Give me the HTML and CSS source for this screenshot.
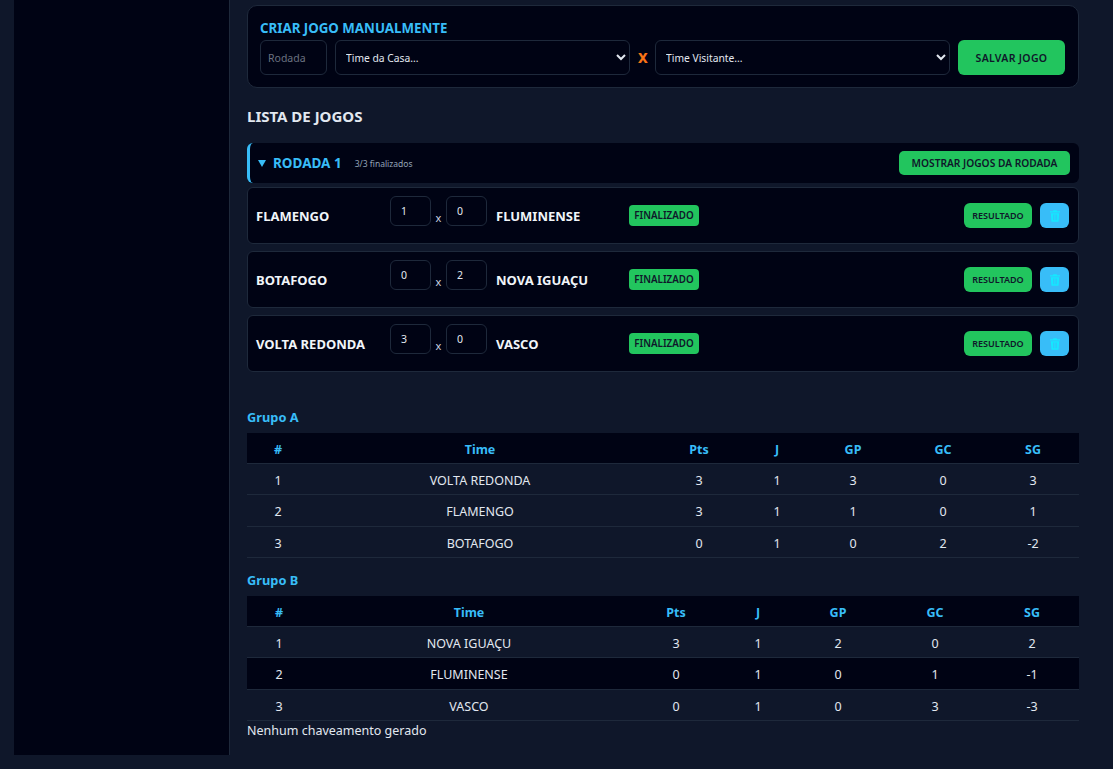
FILE: index.html
```html
<!DOCTYPE html>
<html lang="pt-BR">
<head>
  <meta charset="UTF-8" />
  <title>Jogos</title>
  <link rel="stylesheet" href="styles.css">
</head>
<body>

<div class="layout">
  <div class="sidebar"></div>

  <div class="content">

    <div class="create-card">
      <h3>CRIAR JOGO MANUALMENTE</h3>
      <div class="create-form">
        <input class="round-input" type="text" placeholder="Rodada" />
        <select class="team-select"><option>Time da Casa...</option></select>
        <span class="versus">X</span>
        <select class="team-select"><option>Time Visitante...</option></select>
        <button class="save-btn">SALVAR JOGO</button>
      </div>
    </div>

    <h2 class="list-title">LISTA DE JOGOS</h2>

    <div class="round-header">
      <span class="arrow"></span>
      <span class="round-name">RODADA 1</span>
      <span class="round-count">3/3 finalizados</span>
      <button class="show-btn">MOSTRAR JOGOS DA RODADA</button>
    </div>

    <div class="match">
      <span class="team home">FLAMENGO</span>
      <input class="score" type="text" value="1" />
      <span class="score-x">x</span>
      <input class="score" type="text" value="0" />
      <span class="team away">FLUMINENSE</span>
      <span class="badge">FINALIZADO</span>
      <button class="result-btn">RESULTADO</button>
      <button class="delete-btn">
        <svg viewBox="0 0 12 14" width="10" height="12"><path fill-rule="evenodd" d="M4 0h4l.6 1.2H12v1.6H0V1.2h3.4zM1 3.6h10l-.7 10.4H1.7zM3.6 5.2v7h.9v-7zM5.6 5.2v7h.9v-7zM7.6 5.2v7h.9v-7z" fill="#14e8ff"/></svg>
      </button>
    </div>

    <div class="match">
      <span class="team home">BOTAFOGO</span>
      <input class="score" type="text" value="0" />
      <span class="score-x">x</span>
      <input class="score" type="text" value="2" />
      <span class="team away">NOVA IGUAÇU</span>
      <span class="badge">FINALIZADO</span>
      <button class="result-btn">RESULTADO</button>
      <button class="delete-btn">
        <svg viewBox="0 0 12 14" width="10" height="12"><path fill-rule="evenodd" d="M4 0h4l.6 1.2H12v1.6H0V1.2h3.4zM1 3.6h10l-.7 10.4H1.7zM3.6 5.2v7h.9v-7zM5.6 5.2v7h.9v-7zM7.6 5.2v7h.9v-7z" fill="#14e8ff"/></svg>
      </button>
    </div>

    <div class="match">
      <span class="team home">VOLTA REDONDA</span>
      <input class="score" type="text" value="3" />
      <span class="score-x">x</span>
      <input class="score" type="text" value="0" />
      <span class="team away">VASCO</span>
      <span class="badge">FINALIZADO</span>
      <button class="result-btn">RESULTADO</button>
      <button class="delete-btn">
        <svg viewBox="0 0 12 14" width="10" height="12"><path fill-rule="evenodd" d="M4 0h4l.6 1.2H12v1.6H0V1.2h3.4zM1 3.6h10l-.7 10.4H1.7zM3.6 5.2v7h.9v-7zM5.6 5.2v7h.9v-7zM7.6 5.2v7h.9v-7z" fill="#14e8ff"/></svg>
      </button>
    </div>

    <h4 class="group-title first">Grupo A</h4>
    <table class="standings group-a">
      <colgroup><col class="c1"><col class="c2"><col class="c3"><col class="c4"><col class="c5"><col class="c6"><col class="c7"></colgroup>
      <thead>
        <tr><th>#</th><th>Time</th><th>Pts</th><th>J</th><th>GP</th><th>GC</th><th>SG</th></tr>
      </thead>
      <tbody>
        <tr><td>1</td><td>VOLTA REDONDA</td><td>3</td><td>1</td><td>3</td><td>0</td><td>3</td></tr>
        <tr><td>2</td><td>FLAMENGO</td><td>3</td><td>1</td><td>1</td><td>0</td><td>1</td></tr>
        <tr><td>3</td><td>BOTAFOGO</td><td>0</td><td>1</td><td>0</td><td>2</td><td>-2</td></tr>
      </tbody>
    </table>

    <h4 class="group-title">Grupo B</h4>
    <table class="standings group-b">
      <colgroup><col class="c1"><col class="c2"><col class="c3"><col class="c4"><col class="c5"><col class="c6"><col class="c7"></colgroup>
      <thead>
        <tr><th>#</th><th>Time</th><th>Pts</th><th>J</th><th>GP</th><th>GC</th><th>SG</th></tr>
      </thead>
      <tbody>
        <tr><td>1</td><td>NOVA IGUAÇU</td><td>3</td><td>1</td><td>2</td><td>0</td><td>2</td></tr>
        <tr class="hovered"><td>2</td><td>FLUMINENSE</td><td>0</td><td>1</td><td>0</td><td>1</td><td>-1</td></tr>
        <tr><td>3</td><td>VASCO</td><td>0</td><td>1</td><td>0</td><td>3</td><td>-3</td></tr>
      </tbody>
    </table>

    <p class="no-bracket">Nenhum chaveamento gerado</p>
  </div>
</div>

</body>
</html>
```

FILE: styles.css
```css
* {
  box-sizing: border-box;
  margin: 0;
  padding: 0;
  font-family: "Noto Sans", "Open Sans", sans-serif;
}

html, body {
  height: 100%;
  overflow: hidden;
}

body {
  background-color: #0f172a;
  color: #e2e8f0;
  color-scheme: dark;
  padding: 0 0 14px 14px;
}

.layout {
  display: flex;
  height: 755px;
}

.sidebar {
  width: 216px;
  background-color: #000314;
  border-right: 1px solid #1e293b;
}

.content {
  width: 866px;
  padding: 5px 17px 0 17px;
}

/* criar jogo */
.create-card {
  height: 83px;
  background-color: #000314;
  border: 1px solid #1e293b;
  border-radius: 10px;
  padding: 13px 13px 0 12px;
}

.create-card h3 {
  font-size: 13.3px;
  line-height: 18px;
  font-weight: 700;
  color: #38bdf8;
  margin-bottom: 3px;
}

.create-form {
  display: flex;
  align-items: center;
  gap: 8px;
}

.round-input,
.team-select,
.score {
  background-color: #000314;
  border: 1px solid #1e293b;
  border-radius: 6px;
  color: #e2e8f0;
  outline: none;
}

.round-input {
  width: 67px;
  height: 35px;
  padding: 0 7px;
  font-size: 10.5px;
}

.round-input::placeholder {
  color: #6b7280;
}

.team-select {
  width: 295px;
  height: 35px;
  padding: 0 6px;
  font-size: 10.3px;
}

.versus {
  width: 9px;
  color: #f97316;
  font-weight: 800;
  font-size: 14px;
  text-align: center;
}

.save-btn {
  width: 107px;
  height: 35px;
  background-color: #22c55e;
  border: none;
  border-radius: 6px;
  color: #0f172a;
  font-size: 10.5px;
  font-weight: 600;
  letter-spacing: 0.3px;
}

.list-title {
  font-size: 15px;
  line-height: 20px;
  font-weight: 700;
  color: #e2e8f0;
  margin: 18px 0 17px;
}

/* rodada */
.round-header {
  display: flex;
  align-items: center;
  height: 40px;
  background-color: #000314;
  border-left: 3px solid #38bdf8;
  border-radius: 6px;
  padding: 0 9px 0 8px;
  margin-bottom: 4px;
}

.arrow {
  width: 0;
  height: 0;
  border-left: 4.5px solid transparent;
  border-right: 4.5px solid transparent;
  border-top: 7px solid #38bdf8;
  margin-right: 7px;
}

.round-name {
  font-size: 13.5px;
  font-weight: 700;
  color: #38bdf8;
  margin-right: 13px;
}

.round-count {
  font-size: 8.5px;
  color: #94a3b8;
}

.show-btn {
  margin-left: auto;
  width: 171px;
  height: 24px;
  background-color: #22c55e;
  border: none;
  border-radius: 5px;
  color: #0f172a;
  font-size: 10.2px;
  font-weight: 600;
}

/* jogos */
.match {
  display: flex;
  align-items: center;
  height: 57px;
  background-color: #000314;
  border: 1px solid #1e293b;
  border-radius: 6px;
  padding: 0 9px 0 8px;
  margin-bottom: 7px;
}

.team {
  font-size: 13px;
  font-weight: 700;
  color: #f1f5f9;
}

.home {
  width: 134px;
}

.away {
  width: 133px;
  margin-left: 9px;
}

.score {
  width: 41px;
  height: 30px;
  padding: 0 0 0 10px;
  font-size: 10.5px;
  margin-top: -10px;
}

.score-x {
  width: 15px;
  text-align: center;
  font-size: 11px;
  color: #cbd5e1;
  margin-top: 3px;
}

.badge {
  width: 70px;
  height: 21px;
  line-height: 21px;
  text-align: center;
  background-color: #22c55e;
  border-radius: 4px;
  color: #0f172a;
  font-size: 9.8px;
  font-weight: 600;
}

.result-btn {
  margin-left: auto;
  width: 68px;
  height: 25px;
  background-color: #22c55e;
  border: none;
  border-radius: 6px;
  color: #0f172a;
  font-size: 9px;
  font-weight: 600;
}

.delete-btn {
  display: flex;
  align-items: center;
  justify-content: center;
  width: 29px;
  height: 25px;
  margin-left: 8px;
  background-color: #38bdf8;
  border: none;
  border-radius: 6px;
}

/* tabelas */
.group-title {
  font-size: 12.8px;
  line-height: 18px;
  font-weight: 700;
  color: #38bdf8;
  margin: 13px 0 7px;
}

.group-title.first {
  margin-top: 36px;
}

.standings {
  width: 832px;
  table-layout: fixed;
  border-collapse: collapse;
}

.standings th,
.standings td {
  text-align: center;
  border-bottom: 1px solid #1e293b;
  padding-top: 3px;
}

.standings th {
  height: 30px;
  background-color: #000314;
  color: #38bdf8;
  font-size: 12.5px;
  font-weight: 700;
}

.standings td {
  height: 31.5px;
  font-size: 12.5px;
  color: #e2e8f0;
}

.standings tr.hovered td {
  background-color: #000314;
}

.group-a .c1 { width: 62px; }
.group-a .c2 { width: 342px; }
.group-a .c3 { width: 96px; }
.group-a .c4 { width: 60px; }
.group-a .c5 { width: 92px; }
.group-a .c6 { width: 88px; }
.group-a .c7 { width: 92px; }

.group-b .c1 { width: 64px; }
.group-b .c2 { width: 316px; }
.group-b .c3 { width: 98px; }
.group-b .c4 { width: 66px; }
.group-b .c5 { width: 94px; }
.group-b .c6 { width: 100px; }
.group-b .c7 { width: 94px; }

.no-bracket {
  font-size: 12.5px;
  line-height: 18px;
  margin-top: 1px;
  color: #e2e8f0;
}
```
